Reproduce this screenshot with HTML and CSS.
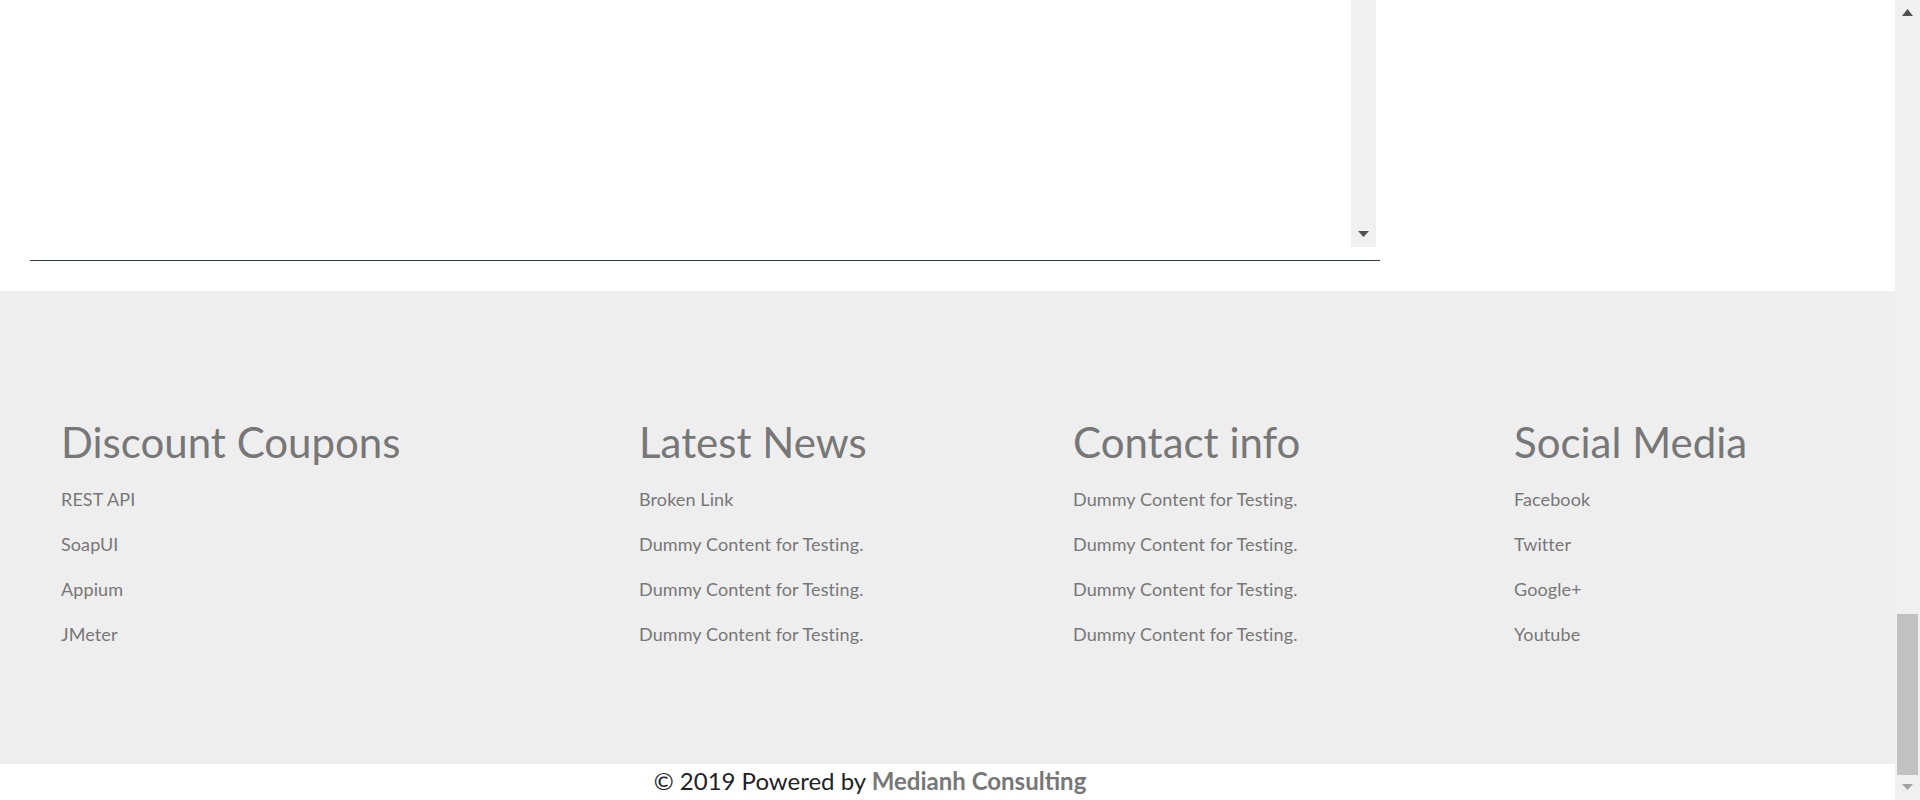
FILE: index.html
```html
<!DOCTYPE html>
<html lang="en">
<head>
<meta charset="utf-8">
<title>Footer</title>
<link rel="stylesheet" href="styles.css">
</head>
<body>
<div class="page">
  <main class="main">
    <section class="top">
      <div class="frame">
        <div class="frame-scroll">
          <svg class="arrow-down" width="11" height="6" viewBox="0 0 11 6"><path d="M0 0H11L5.5 6Z" fill="#505050"/></svg>
        </div>
      </div>
      <hr class="rule">
    </section>
    <footer class="footer">
      <div class="cols">
        <div class="col">
          <h2 class="col-title">Discount Coupons</h2>
          <ul class="links">
            <li>REST API</li>
            <li>SoapUI</li>
            <li>Appium</li>
            <li>JMeter</li>
          </ul>
        </div>
        <div class="col">
          <h2 class="col-title">Latest News</h2>
          <ul class="links">
            <li>Broken Link</li>
            <li>Dummy Content for Testing.</li>
            <li>Dummy Content for Testing.</li>
            <li>Dummy Content for Testing.</li>
          </ul>
        </div>
        <div class="col">
          <h2 class="col-title">Contact info</h2>
          <ul class="links">
            <li>Dummy Content for Testing.</li>
            <li>Dummy Content for Testing.</li>
            <li>Dummy Content for Testing.</li>
            <li>Dummy Content for Testing.</li>
          </ul>
        </div>
        <div class="col">
          <h2 class="col-title">Social Media</h2>
          <ul class="links">
            <li>Facebook</li>
            <li>Twitter</li>
            <li>Google+</li>
            <li>Youtube</li>
          </ul>
        </div>
      </div>
    </footer>
    <div class="copyright">
      <p class="copy-text">© 2019 Powered by <span class="brand">Medianh Consulting</span></p>
    </div>
  </main>
  <aside class="page-scroll">
    <svg class="arrow-up" width="11" height="7" viewBox="0 0 11 7"><path d="M0 7H11L5.5 0Z" fill="#505050"/></svg>
    <div class="thumb"></div>
    <svg class="arrow-down2" width="11" height="6" viewBox="0 0 11 6"><path d="M0 0H11L5.5 6Z" fill="#a3a3a3"/></svg>
  </aside>
</div>
</body>
</html>
```
FILE: styles.css
```css
* { box-sizing: border-box; }
html, body { margin: 0; padding: 0; }
body {
  font-family: Lato, "Open Sans", sans-serif;
  background: #fff;
  width: 1920px;
  height: 800px;
  overflow: hidden;
}
.page {
  display: flex;
  height: 800px;
}
.main {
  width: 1895px;
  display: flex;
  flex-direction: column;
}
.top {
  height: 291px;
  padding-left: 30px;
  background: #fff;
}
.frame {
  width: 1346px;
  height: 247px;
  display: flex;
  justify-content: flex-end;
}
.frame-scroll {
  width: 25px;
  height: 247px;
  background: #f0f0f0;
  display: flex;
  flex-direction: column;
  justify-content: flex-end;
  align-items: center;
  padding-bottom: 10px;
}
.arrow-down { display: block; }
.rule {
  width: 1350px;
  margin: 13px 0 0 0;
  border: 0;
  border-top: 1px solid #2f3a3a;
  height: 0;
}
.footer {
  height: 473px;
  background: #eeeeee;
  padding: 126px 0 0 61px;
}
.cols {
  display: grid;
  grid-template-columns: 578px 434px 441px 1fr;
}
.col-title {
  margin: 0 0 10px 0;
  font-size: 42px;
  line-height: 50px;
  font-weight: 400;
  color: #777777;
}
.links {
  list-style: none;
  margin: 0;
  padding: 0;
}
.links li {
  font-size: 18px;
  line-height: 45px;
  letter-spacing: 0.1px;
  color: #777777;
}
.copyright {
  height: 36px;
  width: 1740px;
  text-align: center;
}
.copy-text {
  margin: 0;
  font-size: 24px;
  line-height: 34px;
  color: #222222;
}
.brand {
  color: #777777;
  font-weight: 700;
}
.page-scroll {
  width: 25px;
  height: 800px;
  background: #f0f0f0;
  display: flex;
  flex-direction: column;
  align-items: center;
  padding-top: 9px;
}
.arrow-up { display: block; }
.thumb {
  width: 21px;
  height: 161px;
  background: #c1c1c1;
  margin-top: 598px;
}
.arrow-down2 {
  display: block;
  margin-top: 9px;
}
```
